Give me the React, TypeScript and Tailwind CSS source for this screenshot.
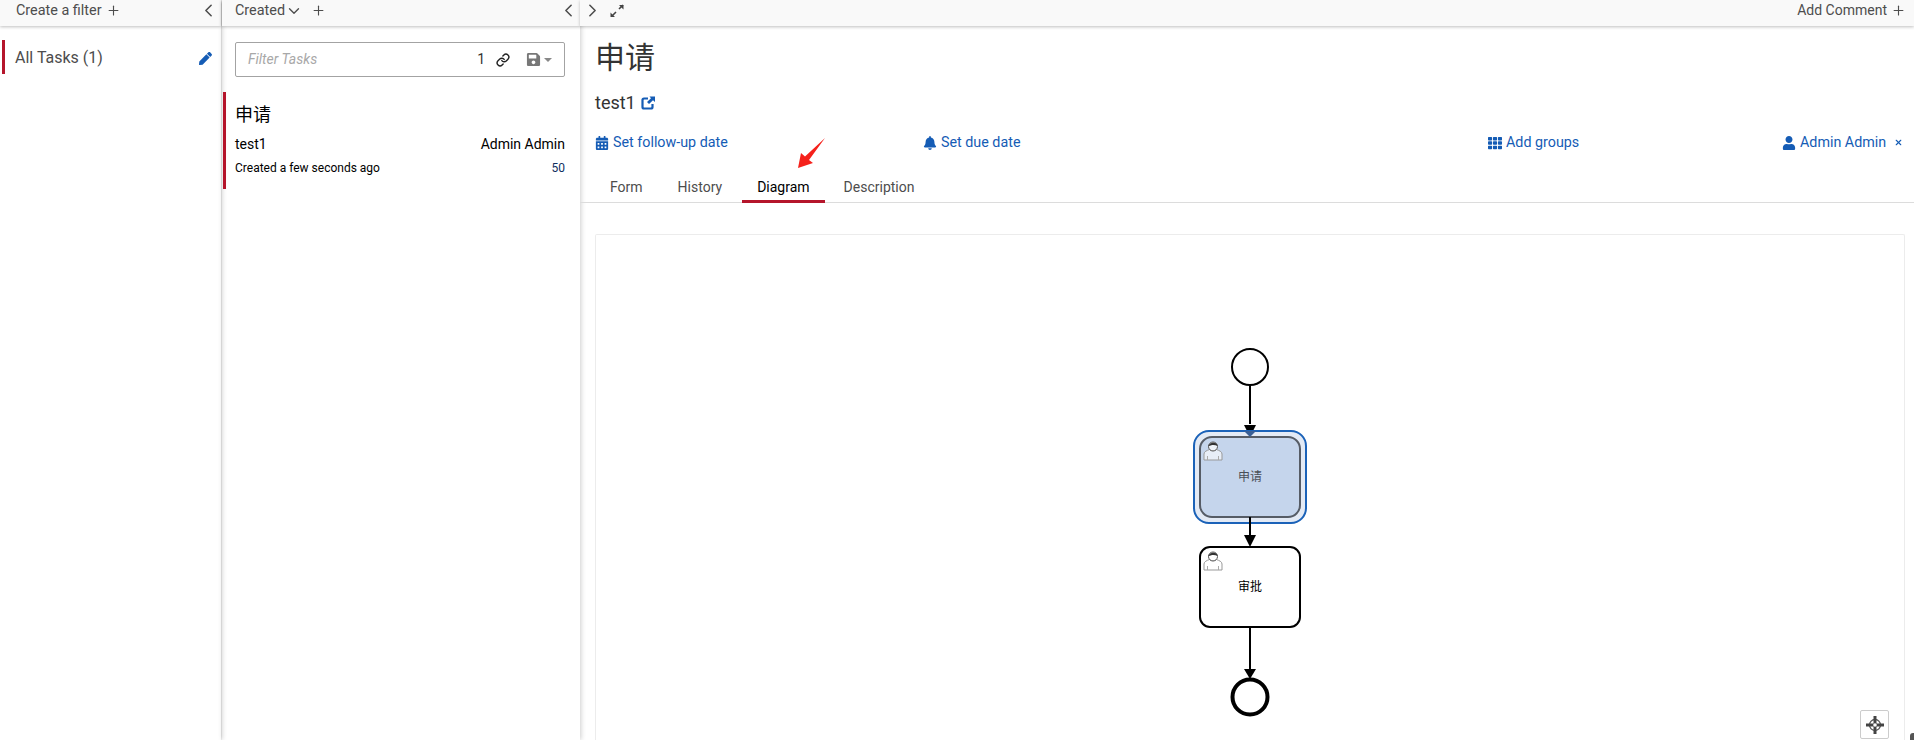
import { ChevronDown, ChevronLeft, ChevronRight, Link, Plus, X } from "lucide-react";
import { FaBell, FaCalendarAlt, FaPen, FaSave, FaTh, FaUser } from "react-icons/fa";

const font = { fontFamily: '"Roboto", "Noto Sans CJK SC", sans-serif' };

function UserGlyph({ x, y }: { x: number; y: number }) {
  return (
    <g transform={`translate(${x} ${y})`}>
      <path
        d="M1 19 V13 C1 10.5 4 9.5 6.5 8.5 C8 10 12 10 13.5 8.5 C16 9.5 19 10.5 19 13 V19 Z"
        fill="#fff"
        fillOpacity="0.6"
        stroke="#999"
        strokeWidth="1"
      />
      <path d="M4.5 15 V19 M15.5 15 V19" stroke="#aaa" strokeWidth="1" />
      <circle cx="10" cy="5.5" r="4.5" fill="#fff" fillOpacity="0.7" stroke="#555" strokeWidth="1" />
      <path d="M5.5 5.5 C5.5 1 14.5 0 14.5 5 C12 3.5 8 3.5 5.5 5.5 Z" fill="#333" />
    </g>
  );
}

function Diagram() {
  return (
    <svg width="130" height="375" viewBox="1185 345 130 375" className="block" style={font}>
      <circle cx="1250" cy="367" r="18" fill="#fff" stroke="#000" strokeWidth="2" />
      <path d="M1250 385 V424" stroke="#000" strokeWidth="2" />
      <path d="M1244 425 H1256 L1250 437 Z" fill="#000" />

      <rect x="1194" y="431" width="112" height="92" rx="15" fill="#e3eaf5" stroke="#1b62b8" strokeWidth="2" />
      <rect x="1200" y="437" width="100" height="80" rx="12" fill="#c5d5ec" stroke="#565c66" strokeWidth="2" />
      <path d="M1244 431 H1256 L1250 437 Z" fill="#3a5f96" />
      <UserGlyph x={1203} y={441} />
      <text x="1250" y="481" textAnchor="middle" fontSize="12" fill="#4a4f57">申请</text>

      <path d="M1250 517 V536" stroke="#000" strokeWidth="2" />
      <path d="M1244 535 H1256 L1250 547 Z" fill="#000" />

      <rect x="1200" y="547" width="100" height="80" rx="10" fill="#fff" stroke="#000" strokeWidth="2" />
      <UserGlyph x={1203} y={551} />
      <text x="1250" y="591" textAnchor="middle" fontSize="12" fill="#000">审批</text>

      <path d="M1250 627 V670" stroke="#000" strokeWidth="2" />
      <path d="M1244 669 H1256 L1250 679 Z" fill="#000" />
      <circle cx="1250" cy="697" r="17.5" fill="#fff" stroke="#000" strokeWidth="4" />
    </svg>
  );
}

function LinkItem({ icon, label }: { icon: React.ReactNode; label: string }) {
  return (
    <span className="flex items-center gap-[4px] text-[14.3px] text-[#155cb5]">
      {icon}
      {label}
    </span>
  );
}

export default function App() {
  return (
    <div className="relative flex h-[740px] w-[1914px] overflow-hidden bg-white text-[#4d4d4d]" style={font}>
      {/* filters */}
      <aside className="flex w-[221px] shrink-0 flex-col shadow-[1px_0_5px_rgba(0,0,0,0.2)]">
        <div className="flex h-[26px] items-center justify-between bg-[#f9f9f9] pb-[5px] pl-[16px] pr-[2px] text-[14.4px] shadow-[0_1px_3px_rgba(0,0,0,0.25)]">
          <span className="flex items-center gap-[4px]">
            Create a filter <Plus size={15} strokeWidth={1.8} />
          </span>
          <ChevronLeft size={21} strokeWidth={1.8} />
        </div>
        <div className="mt-[14px] ml-[2px] flex h-[34px] items-center justify-between border-l-[3px] border-[#b5152b] pl-[10px] pr-[9px] pt-[2px] text-[16px]">
          All Tasks (1)
          <FaPen size={13} className="text-[#155cb5]" />
        </div>
      </aside>

      {/* task list */}
      <section className="ml-[1px] flex w-[358px] shrink-0 flex-col shadow-[1px_0_5px_rgba(0,0,0,0.2)]">
        <div className="flex h-[26px] items-center justify-between bg-[#f9f9f9] pb-[5px] pl-[13px] pr-[1px] text-[14.4px] shadow-[0_1px_3px_rgba(0,0,0,0.25)]">
          <span className="flex items-center">
            Created
            <ChevronDown size={18} strokeWidth={1.8} />
            <Plus size={15} strokeWidth={1.8} className="ml-[8px]" />
          </span>
          <ChevronLeft size={21} strokeWidth={1.8} />
        </div>
        <div className="ml-[13px] mr-[15px] mt-[16px] flex h-[35px] items-center rounded-[2px] border border-[#a3a3a3] pl-[12px] pr-[12px]">
          <span className="flex-1 text-[14px] italic text-[#a8a8a8]">Filter Tasks</span>
          <span className="text-[14px] text-[#333]">1</span>
          <Link size={14} strokeWidth={2.4} className="ml-[11px] text-[#222]" />
          <FaSave size={15} className="ml-[16px] text-[#777]" />
          <span className="ml-[3px] mt-[1px] border-x-[4px] border-t-[4px] border-x-transparent border-t-[#888]" />
        </div>
        <div className="ml-[1px] mt-[15px] h-[97px] border-l-[3px] border-[#b5152b] pl-[9px] pr-[15px] pt-[11px] text-black">
          <div className="text-[18px] leading-[24px]">申请</div>
          <div className="mt-[7px] flex justify-between text-[14px] leading-[20px]">
            <span>test1</span>
            <span>Admin Admin</span>
          </div>
          <div className="mt-[5px] flex justify-between text-[12px] leading-[18px]">
            <span>Created a few seconds ago</span>
            <span className="text-[#0f2f5f]">50</span>
          </div>
        </div>
      </section>

      {/* task detail */}
      <main className="flex min-w-0 flex-1 flex-col">
        <div className="flex h-[26px] shrink-0 items-center justify-between bg-[#f9f9f9] pb-[5px] pl-[2px] pr-[8px] text-[14px] shadow-[0_1px_3px_rgba(0,0,0,0.25)]">
          <span className="flex items-center gap-[6px]">
            <ChevronRight size={21} strokeWidth={1.8} />
            <svg width="16" height="16" viewBox="0 0 16 16" fill="none" stroke="#444" strokeWidth="1.6">
              <path d="M10 6 L14 2 M3 13 L7 9" />
              <path d="M10 2 H14.5 V6.5 Z M1.5 9.5 V14 H6 Z" fill="#444" stroke="none" />
            </svg>
          </span>
          <span className="flex items-center gap-[4px]">
            Add Comment <Plus size={15} strokeWidth={1.8} />
          </span>
        </div>
        <div className="pl-[15px] pr-[10px]">
          <h1 className="mt-[12px] text-[30px] leading-[40px] text-[#333]">申请</h1>
          <div className="mt-[13px] flex items-center gap-[5px] text-[18px] leading-[24px] text-[#333]">
            test1
            <svg width="14" height="14" viewBox="0 0 14 14" fill="none">
              <path d="M7 2.5 H3 Q1.5 2.5 1.5 4 V11 Q1.5 12.5 3 12.5 H10 Q11.5 12.5 11.5 11 V8" stroke="#155cb5" strokeWidth="2.2" />
              <path d="M8.5 0.5 H14 V6 L12 4.2 L8 8 L6 6 L10 2.2 Z" fill="#155cb5" />
            </svg>
          </div>
          <div className="mt-[17px] grid grid-cols-[328px_565px_294px_1fr] items-center">
            <LinkItem icon={<FaCalendarAlt size={14} />} label="Set follow-up date" />
            <LinkItem icon={<FaBell size={14} />} label="Set due date" />
            <LinkItem icon={<FaTh size={14} />} label="Add groups" />
            <span className="flex items-center justify-between pr-[1px]">
              <LinkItem icon={<FaUser size={14} />} label="Admin Admin" />
              <X size={9} strokeWidth={3} className="text-[#155cb5]" />
            </span>
          </div>
        </div>
        <nav className="mt-[21px] flex h-[29px] shrink-0 border-b border-[#dcdcdc] pl-[14px] text-[14px]">
          <span className="px-[16px] pt-[3px]">Form</span>
          <span className="ml-[3px] px-[16px] pt-[3px]">History</span>
          <span className="ml-[4px] h-[29px] border-b-[3px] border-[#b5152b] px-[15px] pt-[3px] text-black">Diagram</span>
          <span className="ml-[3px] px-[16px] pt-[3px]">Description</span>
        </nav>
        <div className="relative ml-[15px] mr-[9px] mt-[31px] min-h-0 flex-1 rounded-t-[2px] border border-b-0 border-[#ececec]">
          <div className="flex justify-center pt-[110px]">
            <Diagram />
          </div>
          <button className="absolute bottom-[1px] right-[15px] flex h-[29px] w-[29px] items-center justify-center rounded-[2px] border border-[#ccc] bg-white">
            <svg width="20" height="20" viewBox="0 0 20 20" fill="none">
              <circle cx="10" cy="10" r="5.5" stroke="#555" strokeWidth="1.3" />
              <path d="M10 1 V19 M1 10 H19" stroke="#444" strokeWidth="3" />
              <circle cx="10" cy="10" r="1.8" fill="#fff" />
            </svg>
          </button>
        </div>
        <span className="absolute bottom-0 right-0 h-[7px] w-[4px] rounded-tl-[3px] bg-[#555]" />
      </main>

      {/* annotation */}
      <svg className="absolute left-[796px] top-[136px]" width="32" height="34" viewBox="0 0 32 34">
        <path d="M2 32 L5 17 L9 20.5 L29 2 L13 24 L17 27 Z" fill="#f5211b" />
      </svg>
    </div>
  );
}
